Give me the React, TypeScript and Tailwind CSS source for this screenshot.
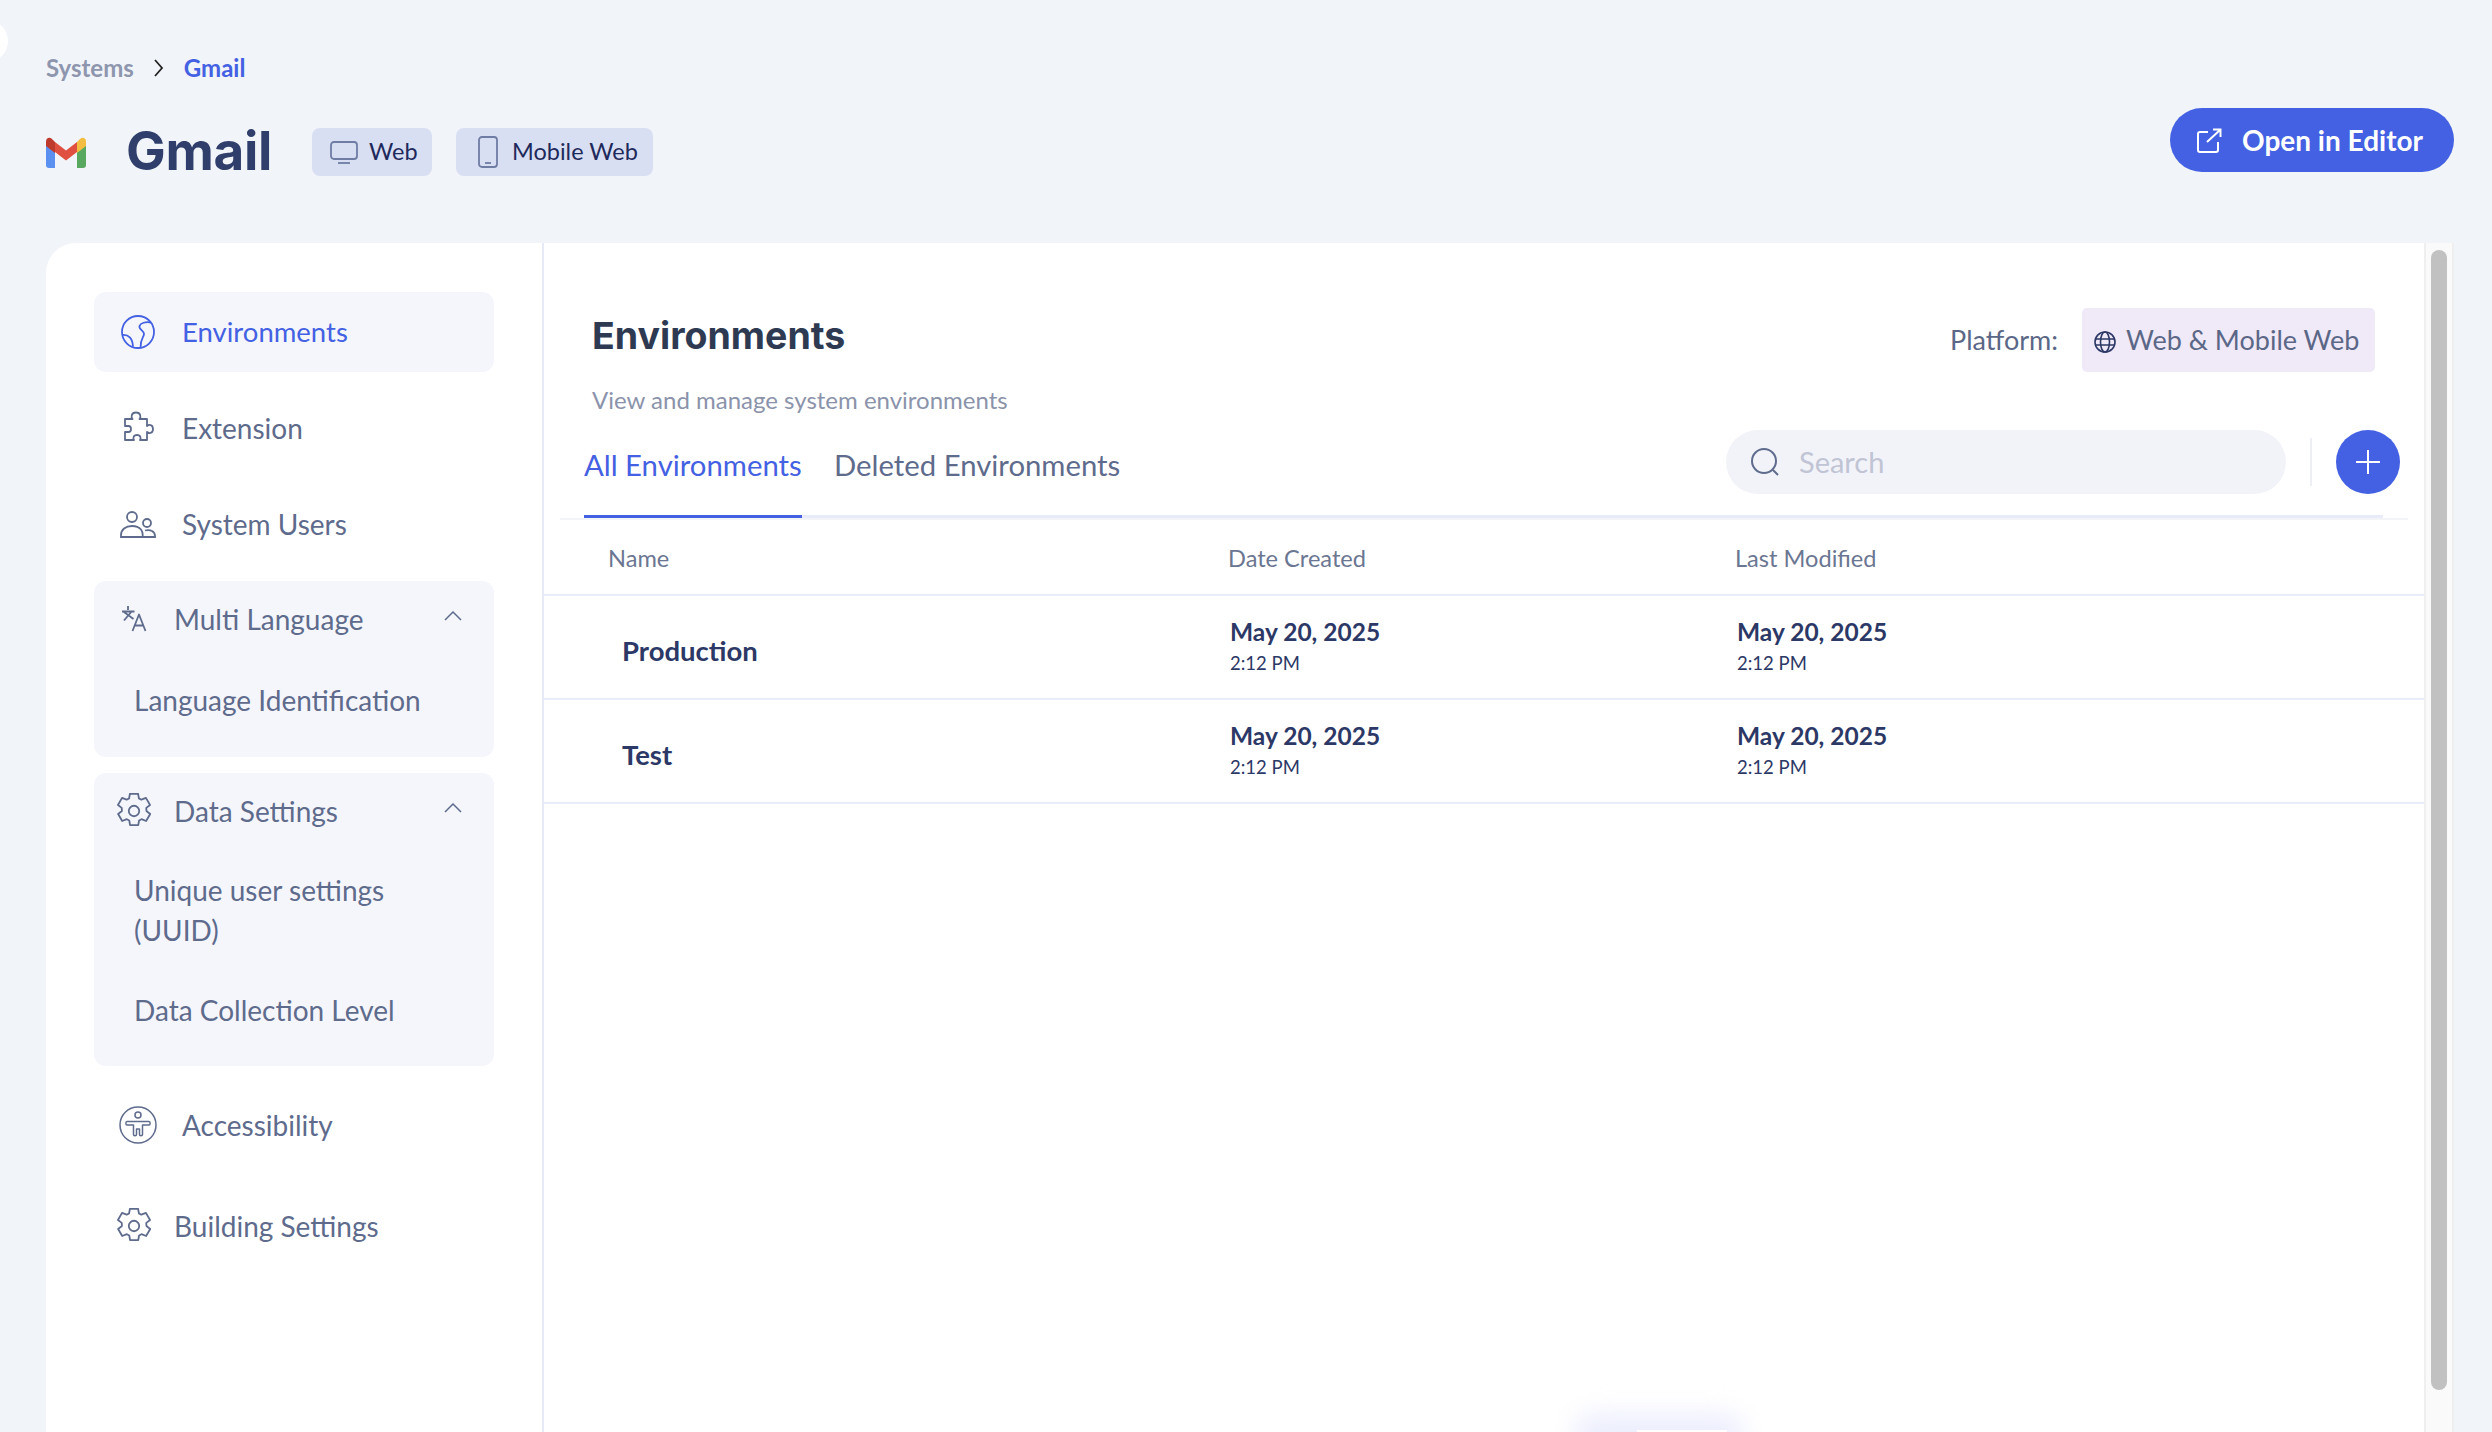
import type { ReactNode } from 'react';

const font = "font-['Lato','Liberation_Sans',sans-serif]";

function GmailLogo() {
  return (
    <svg width="40" height="31" viewBox="0 0 40 31">
      <path fill="#5b8ff0" d="M0 8v20a3 3 0 0 0 3 3h6V14z" />
      <path fill="#58a85f" d="M31 14v17h6a3 3 0 0 0 3-3V8z" />
      <path fill="#df5040" d="M9 15l11 8.5L31 15V5L20 13.500 9 5z" />
      <path fill="#bd3a2c" d="M0 9l9 7V5L6 2C3.500-.3 0 1 0 4.500z" />
      <path fill="#f3bd42" d="M31 5v11l9-7V4.500C40 1 36.500-.3 34 2z" />
    </svg>
  );
}

function GlobeIcon() {
  return (
    <svg width="34" height="34" viewBox="0 0 34 34" fill="none" stroke="#4361e2" strokeWidth="1.800">
      <circle cx="17" cy="17" r="16" />
      <path d="M30 7.500c-5.500-1-10.500.5-11.500 3.500-1 3.500 4.500 4.500 4.500 8 0 3-3.500 4-3.500 14" />
      <path d="M1.500 20c6-.5 10 3 10.500 11.500" />
    </svg>
  );
}

function PuzzleIcon() {
  return (
    <svg width="34" height="34" viewBox="-2 0 34 34" fill="none" stroke="#5e6b8c" strokeWidth="1.800" strokeLinejoin="round">
      <path d="M2 8h7.500c-1.500-1.500-1.500-6.500 3.500-6.500s5 5 3.500 6.500H24v7c1.500-1.500 6-2 6 3s-4.500 4.500-6 3v8h-7c1-1.500 1-5-3-5s-4 3.500-3 5H2v-8h3.500c1.500 0 2.500-1.500 2.500-3s-1-3-2.500-3H2z" />
    </svg>
  );
}

function UsersIcon() {
  return (
    <svg width="36" height="27" viewBox="0 0 36 27" fill="none" stroke="#5e6b8c" strokeWidth="1.800">
      <circle cx="12" cy="6" r="5" />
      <path d="M1 26v-2c0-5.500 4.500-9 11-9 4 0 7 1.200 9 3.500 1.200 1.500 1.700 3.500 1.700 5.500v2z" />
      <circle cx="27" cy="12" r="4" />
      <path d="M25 19.500c5.500-1.500 10 1 10 5.500v1H22.700" />
    </svg>
  );
}

function LanguageIcon() {
  return (
    <svg width="26" height="27" viewBox="0 0 26 27" fill="none" stroke="#5e6b8c" strokeWidth="1.800" strokeLinejoin="round">
      <path d="M7 1v4M1 6.500h12.500M11 6l-8 9.500M3 7l9.500 7" />
      <path d="M11.500 26L18 9.500 24.500 26M13.800 20.500h8.400" />
    </svg>
  );
}

function GearIcon() {
  return (
    <svg width="36" height="36" viewBox="1 1 22 22" fill="none" stroke="#5e6b8c" strokeWidth="1.100" strokeLinejoin="round">
      <path d="M9.500 1.500h5l.5 2.800 1.500.8 2.800-1.100 2.500 4.300-2.300 1.800.1 1.900 2.300 1.800-2.500 4.300-2.800-1.100-1.500.8-.5 2.800h-5l-.5-2.800-1.500-.8-2.800 1.100-2.500-4.300 2.300-1.800-.1-1.900-2.300-1.800 2.500-4.300 2.800 1.100 1.500-.8z" />
      <circle cx="12" cy="12" r="3.200" />
    </svg>
  );
}

function AccessibilityIcon() {
  return (
    <svg width="38" height="38" viewBox="0 0 38 38" fill="none" stroke="#5e6b8c" strokeWidth="1.500" strokeLinejoin="round">
      <circle cx="19" cy="19" r="18" />
      <circle cx="19" cy="9" r="3" />
      <path d="M8 15.500h22c1.500 0 1.500 3.500 0 3.500h-6.500v9.500c0 1.500-3 1.500-3 0V23h-3v5.500c0 1.500-3 1.500-3 0V19H8c-1.500 0-1.500-3.500 0-3.500z" />
    </svg>
  );
}

function Chevron() {
  return (
    <svg width="18" height="10" viewBox="0 0 18 10" fill="none" stroke="#5e6b8c" strokeWidth="1.500">
      <path d="M1 9l8-8 8 8" />
    </svg>
  );
}

function NavItem({ icon, label, active, className }: { icon: ReactNode; label: string; active?: boolean; className?: string }) {
  return (
    <div
      className={`flex h-[80px] w-[400px] items-center rounded-[12px] ${active ? 'bg-[#f5f6fc] text-[27.500px] text-[#4361e2]' : 'pb-[2px] text-[28px] text-[#5e6b8c]'} ${className ?? ''}`}
    >
      <span className="flex w-[88px] shrink-0 justify-center">{icon}</span>
      {label}
    </div>
  );
}

function SubPanel({ icon, label, children, className }: { icon: ReactNode; label: string; children: ReactNode; className: string }) {
  return (
    <div className={`mt-[16px] w-[400px] rounded-[12px] bg-[#f5f6fc] text-[28px] text-[#5e6b8c] ${className}`}>
      <div className="flex h-[75px] items-center justify-between pr-[32px]">
        <div className="flex items-center">
          <span className="flex w-[80px] shrink-0 justify-center">{icon}</span>
          {label}
        </div>
        <span className="mb-[5px]">
          <Chevron />
        </span>
      </div>
      <div className="pl-[40px]">{children}</div>
    </div>
  );
}

function Row({ name }: { name: string }) {
  return (
    <div className="grid h-[104px] grid-cols-[684px_507px_1fr] items-center border-b-2 border-[#e8ecf8]">
      <div className="pt-[7px] pl-[78px] text-[27.500px] font-bold text-[#2c3866]">{name}</div>
      {[0, 1].map((i) => (
        <div key={i} className="pl-[2px] text-[#2c3866]">
          <div className="text-[24.500px] leading-[32px] font-bold">May 20, 2025</div>
          <div className="text-[18.500px] leading-[31px]">2:12 PM</div>
        </div>
      ))}
    </div>
  );
}

export default function App() {
  return (
    <div className={`relative h-[1432px] w-[2492px] overflow-hidden bg-[#f1f4f9] ${font}`}>
      {/* leftover edge of a collapsed handle */}
      <div className="absolute top-[20px] left-[-34px] h-[42px] w-[42px] rounded-full bg-white" />

      <div className="flex h-[108px] items-end pl-[46px] pb-[26px] text-[24px] leading-[28px] font-bold">
        <span className="text-[#8e96ae]">Systems</span>
        <svg className="mx-[20px] mb-[4px]" width="10" height="20" viewBox="0 0 10 20" fill="none" stroke="#222" strokeWidth="1.800">
          <path d="M1 2l7 8-7 8" />
        </svg>
        <span className="text-[#4361e2]">Gmail</span>
      </div>

      <div className="flex h-[135px] items-start pr-[38px] pl-[46px]">
        <div className="mt-[29px]">
          <GmailLogo />
        </div>
        <div className="mt-[13px] ml-[40px] w-[144px] font-['Inter',sans-serif] text-[53px] leading-[60px] font-bold tracking-[-0.300px] text-[#2f3e6b]">Gmail</div>
        <div className="mt-[20px] ml-[42px] flex h-[48px] w-[120px] items-center rounded-[8px] bg-[#d9dff2] pl-[18px] text-[23.500px] text-[#1f2a5c]">
          <svg className="mr-[11px]" width="28" height="23" viewBox="0 0 28 23" fill="none" stroke="#6f7ca3" strokeWidth="1.800">
            <rect x="1" y="1" width="26" height="17" rx="3" />
            <path d="M8 22h12" />
          </svg>
          Web
        </div>
        <div className="mt-[20px] ml-[24px] flex h-[48px] w-[197px] items-center rounded-[8px] bg-[#d9dff2] pl-[22px] text-[23.500px] text-[#1f2a5c]">
          <svg className="mr-[14px]" width="20" height="32" viewBox="0 0 20 32" fill="none" stroke="#6f7ca3" strokeWidth="1.800">
            <rect x="1" y="1" width="18" height="30" rx="3" />
            <path d="M7 27h6" />
          </svg>
          Mobile Web
        </div>
        <div className="ml-auto flex h-[64px] w-[284px] items-center rounded-full bg-[#4361e2] pl-[27px] text-[28px] font-bold text-white">
          <svg className="mr-[20px]" width="25" height="25" viewBox="0 0 25 25" fill="none" stroke="#ffffff" strokeWidth="2">
            <path d="M11 4H3a2 2 0 0 0-2 2v16a2 2 0 0 0 2 2h16a2 2 0 0 0 2-2v-8" />
            <path d="M10 14L23 2M16 1.500h7.500V9" />
          </svg>
          Open in Editor
        </div>
      </div>

      <div className="ml-[46px] flex h-[1189px] w-[2408px] overflow-hidden rounded-tl-[30px] bg-white">
        <aside className="w-[498px] shrink-0 border-r-2 border-[#e6ebf7] pt-[49px] pl-[48px]">
          <NavItem active icon={<GlobeIcon />} label="Environments" />
          <NavItem className="mt-[17px]" icon={<PuzzleIcon />} label="Extension" />
          <NavItem className="mt-[16px]" icon={<UsersIcon />} label="System Users" />
          <SubPanel className="h-[176px]" icon={<LanguageIcon />} label="Multi Language">
            <div className="pt-[24px] leading-[40px]">Language Identification</div>
          </SubPanel>
          <SubPanel className="h-[293px]" icon={<GearIcon />} label="Data Settings">
            <div className="pt-[22px] pr-[40px] leading-[40px]">Unique user settings (UUID)</div>
            <div className="pt-[40px] leading-[40px]">Data Collection Level</div>
          </SubPanel>
          <NavItem className="mt-[20px]" icon={<AccessibilityIcon />} label="Accessibility" />
          <div className="mt-[21px] flex h-[80px] w-[400px] items-center pb-[2px] text-[28px] text-[#5e6b8c]">
            <span className="flex w-[80px] shrink-0 justify-center">
              <GearIcon />
            </span>
            Building Settings
          </div>
        </aside>

        <main className="relative w-[1880px] shrink-0">
          <div className="flex items-start justify-between pt-[65px] pr-[49px] pl-[48px]">
            <div>
              <div className="mt-[5px] font-['Inter',sans-serif] text-[37.500px] leading-[46px] font-bold text-[#2e3a52]">Environments</div>
              <div className="mt-[25px] text-[24px] leading-[32px] text-[#8b93ab]">View and manage system environments</div>
            </div>
            <div className="flex items-center text-[27px] text-[#5b6787]">
              Platform:
              <div className="ml-[24px] flex h-[64px] w-[293px] items-center rounded-[5px] bg-[#f0e9f7] pl-[12px]">
                <svg className="mt-[4px] mr-[10px]" width="22" height="22" viewBox="0 0 22 22" fill="none" stroke="#2c3866" strokeWidth="1.600">
                  <circle cx="11" cy="11" r="10" />
                  <ellipse cx="11" cy="11" rx="4.500" ry="10" />
                  <path d="M1 8h20M1 14h20" />
                </svg>
                Web &amp; Mobile Web
              </div>
            </div>
          </div>

          <div className="mt-[9px] ml-[40px] flex h-[93px] w-[1799px] items-start border-b-[3px] border-[#e8ecfa] pt-[5px]">
            <div className="flex h-[88px] w-[218px] items-start border-b-[3px] border-[#4361e2] pt-[15px] text-[29.300px] leading-[40px] text-[#4361e2]">
              All Environments
            </div>
            <div className="ml-[32px] pt-[15px] text-[29.300px] leading-[40px] text-[#5e6b8c]">Deleted Environments</div>
            <div className="ml-auto flex h-[64px] w-[560px] items-center rounded-full bg-[#f2f3f9] pl-[23px] text-[29px] text-[#c0c4d4]">
              <svg className="mr-[18px]" width="32" height="32" viewBox="0 0 32 32" fill="none" stroke="#5e6b8c" strokeWidth="2">
                <circle cx="15" cy="15" r="12" />
                <path d="M24 24l5 5" />
              </svg>
              Search
            </div>
            <div className="mt-[8px] ml-[24px] h-[48px] w-[2px] bg-[#eeeff4]" />
            <div className="mr-[-17px] ml-[24px] flex h-[64px] w-[64px] shrink-0 items-center justify-center rounded-full bg-[#4361e2]">
              <svg width="24" height="24" viewBox="0 0 24 24" stroke="#ffffff" strokeWidth="2">
                <path d="M12 0v24M0 12h24" />
              </svg>
            </div>
          </div>
          <div className="ml-[16px] h-[2px] w-[1848px] bg-[#f3f4f8]" />

          <div className="grid h-[76px] grid-cols-[684px_507px_1fr] items-center border-b-2 border-[#e8ecf8] pt-[3px] text-[23.600px] text-[#6b7692]">
            <div className="pl-[64px]">Name</div>
            <div>Date Created</div>
            <div>Last Modified</div>
          </div>
          <Row name="Production" />
          <Row name="Test" />
          {/* faint glow of a floating widget at the bottom edge */}
          <div className="absolute bottom-[-22px] left-[1030px] h-[40px] w-[170px] rounded-full bg-[#eceefd] blur-[12px]" />
          <div className="absolute bottom-[0px] left-[1093px] h-[2px] w-[90px] bg-white" />
        </main>

        <div className="flex w-[30px] shrink-0 justify-center border-x-2 border-[#efefef] bg-[#fafafa] pt-[7px]">
          <div className="h-[1140px] w-[16px] rounded-full bg-[#c1c1c1]" />
        </div>
      </div>
    </div>
  );
}
